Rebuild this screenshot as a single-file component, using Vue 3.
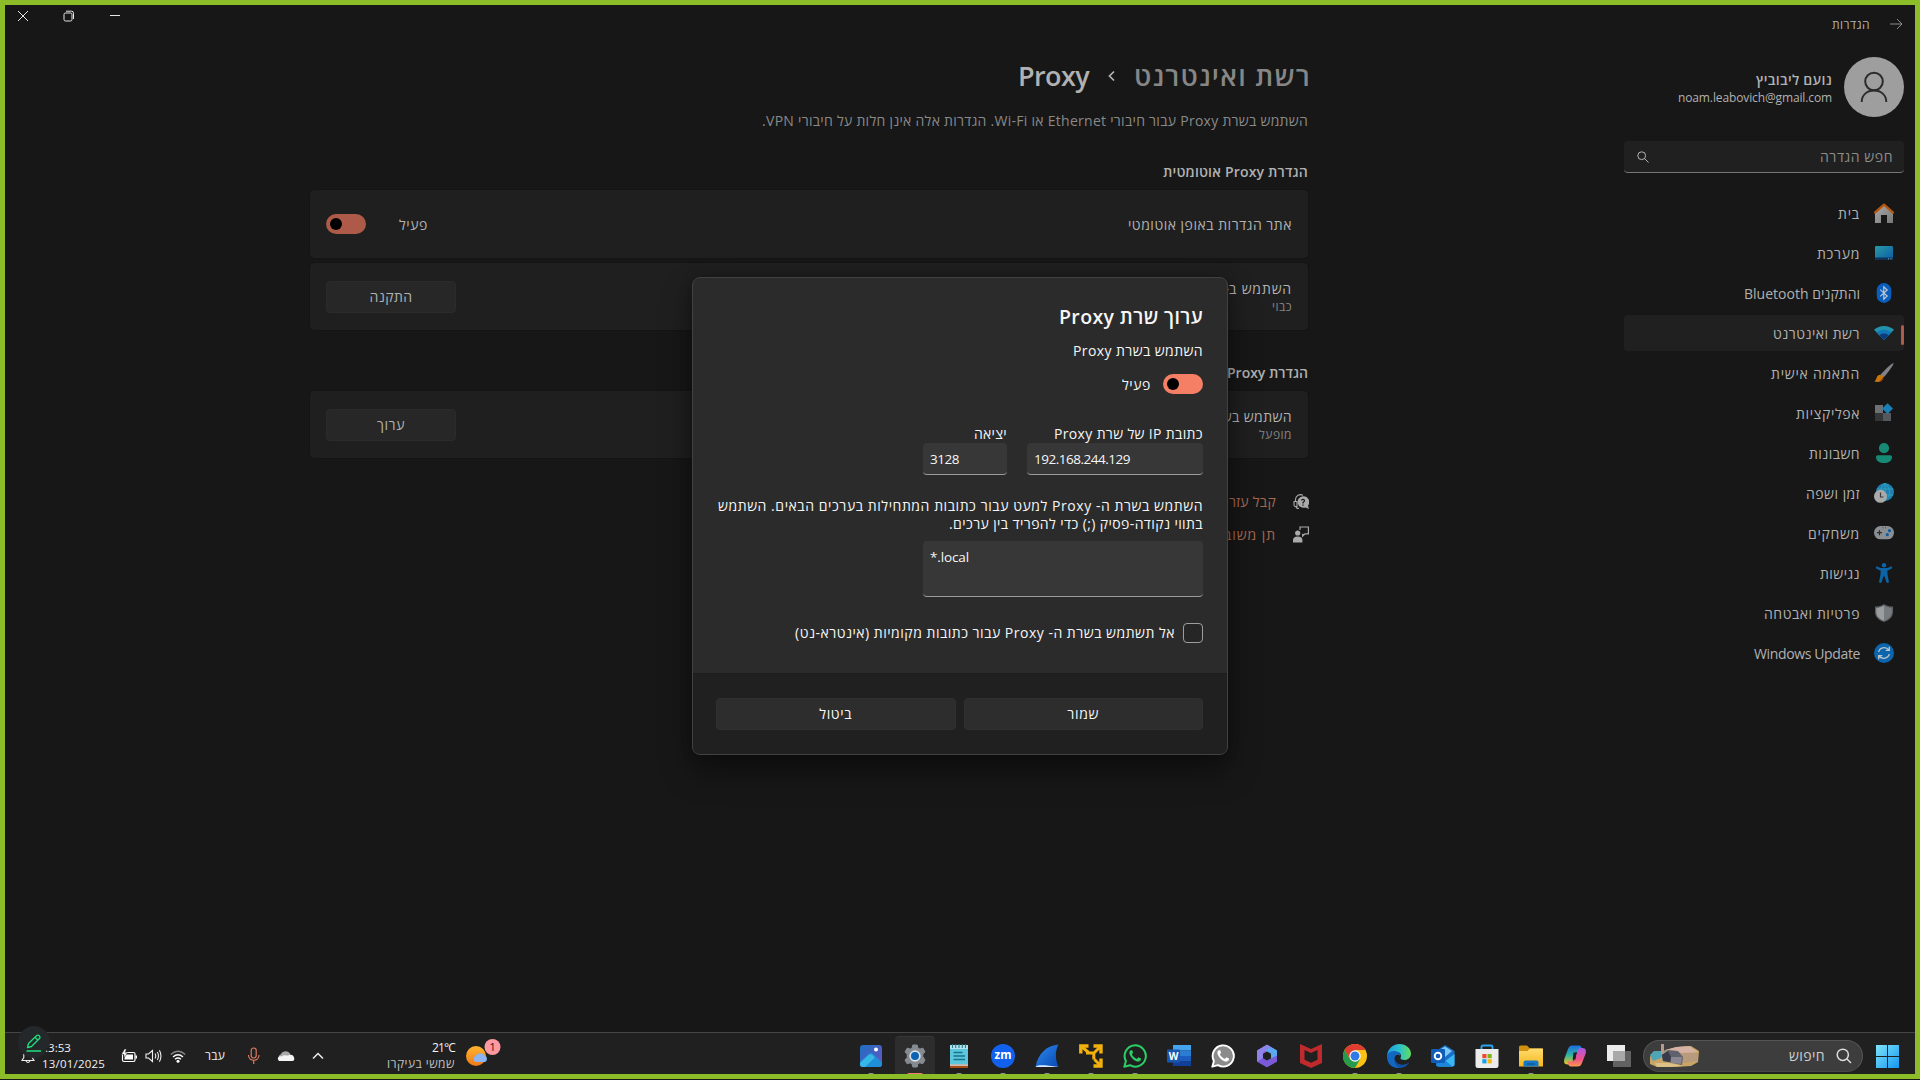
<script setup>
const nav = [
  { icon: 'home', text: 'בית', w: 22 },
  { icon: 'system', text: 'מערכת', w: 43 },
  { icon: 'bluetooth', text: 'והתקנים Bluetooth', w: 116 },
  { icon: 'network', text: 'רשת ואינטרנט', w: 87, active: true },
  { icon: 'brush', text: 'התאמה אישית', w: 89 },
  { icon: 'apps', text: 'אפליקציות', w: 64 },
  { icon: 'accounts', text: 'חשבונות', w: 51 },
  { icon: 'time', text: 'זמן ושפה', w: 54 },
  { icon: 'games', text: 'משחקים', w: 52 },
  { icon: 'access', text: 'נגישות', w: 40 },
  { icon: 'shield', text: 'פרטיות ואבטחה', w: 96 },
  { icon: 'update', text: 'Windows Update', w: 106 },
]

const taskApps = [
  { icon: 'taskview' },
  { icon: 'copilot' },
  { icon: 'explorer', open: true },
  { icon: 'store' },
  { icon: 'outlook' },
  { icon: 'edge', open: true },
  { icon: 'chrome', open: true },
  { icon: 'mcafee' },
  { icon: 'm365' },
  { icon: 'wagray' },
  { icon: 'word', label: 'W' },
  { icon: 'whatsapp', open: true },
  { icon: 'vmware', open: true },
  { icon: 'shark', open: true },
  { icon: 'zoom', open: true, label: 'zm' },
  { icon: 'notepad', open: true },
  { icon: 'settings', active: true },
  { icon: 'photos', open: true },
]

// Tracks a label so that it spans the given width in pixels.
const vFit = {
  mounted(el, { value }) {
    const natural = el.getBoundingClientRect().width
    el.style.letterSpacing = `${((value - natural) / el.textContent.length).toFixed(3)}px`
  },
}
</script>

<template>
  <div class="desktop" dir="rtl">
    <svg class="defs" width="0" height="0">
      <defs>
        <linearGradient id="gTeal" x1="0" y1="0" x2="1" y2="1"><stop offset="0" stop-color="#2a9aa5" /><stop offset="1" stop-color="#0a5ca5" /></linearGradient>
        <linearGradient id="gHome" x1="0" y1="0" x2="1" y2="1"><stop offset="0" stop-color="#aaa" /><stop offset="1" stop-color="#777" /></linearGradient>
        <linearGradient id="gPhoto" x1="0" y1="0" x2="1" y2="1"><stop offset="0" stop-color="#1d6fc0" /><stop offset="1" stop-color="#6b54c4" /></linearGradient>
        <linearGradient id="gWin" x1="0" y1="0" x2="1" y2="1"><stop offset="0" stop-color="#7fe4fb" /><stop offset="1" stop-color="#1597f0" /></linearGradient>
        <linearGradient id="gEdge" x1="0" y1="0" x2="1" y2="0"><stop offset="0" stop-color="#1b9de2" /><stop offset=".55" stop-color="#2fc3c8" /><stop offset="1" stop-color="#62dc5a" /></linearGradient>
        <linearGradient id="gCopA" x1="0" y1="0" x2="0" y2="1"><stop offset="0" stop-color="#1b6ce0" /><stop offset=".5" stop-color="#2db5a0" /><stop offset="1" stop-color="#f5c31c" /></linearGradient>
        <linearGradient id="gCopB" x1="0" y1="0" x2="0" y2="1"><stop offset="0" stop-color="#a65ae6" /><stop offset=".6" stop-color="#f0508c" /><stop offset="1" stop-color="#ff9a4a" /></linearGradient>
        <linearGradient id="gM" x1="0" y1="0" x2="1" y2="1"><stop offset="0" stop-color="#c070e0" /><stop offset="1" stop-color="#4a5fd8" /></linearGradient>
        <linearGradient id="gSun" x1="0" y1="0" x2="0" y2="1"><stop offset="0" stop-color="#ffb52e" /><stop offset="1" stop-color="#f07818" /></linearGradient>
        <linearGradient id="gShark" x1="0" y1="0" x2="1" y2="1"><stop offset="0" stop-color="#2a8cf0" /><stop offset="1" stop-color="#0b48b4" /></linearGradient>
        <linearGradient id="gFolder" x1="0" y1="0" x2="0" y2="1"><stop offset="0" stop-color="#ffdc6e" /><stop offset="1" stop-color="#f6b820" /></linearGradient>
      </defs>

      <symbol id="home" viewBox="0 0 20 20"><path d="M1 8.5 10 1.5 19 8.5V20H13V12H7V20H1Z" fill="url(#gHome)" /><path d="M.9 9.6 10 1.6 19.1 9.6" fill="none" stroke="#b5560f" stroke-width="2.3" stroke-linecap="round" stroke-linejoin="round" /></symbol>
      <symbol id="system" viewBox="0 0 20 20"><rect x="1" y="3" width="18" height="14" rx="1.2" fill="url(#gTeal)" /><path d="M1 14.6H19V16a1 1 0 0 1-1 1H2a1 1 0 0 1-1-1Z" fill="#0d3358" /><path d="M14 15.8h1M16.5 15.8h1" stroke="#9ab" stroke-width="1" /></symbol>
      <symbol id="bluetooth" viewBox="0 0 20 20"><rect x="2.7" y="0" width="14.6" height="20" rx="7.3" fill="#0a5dbb" /><path d="M6.2 6.6 13.2 13 9.8 16.2V3.8L13.2 7 6.2 13.4" fill="none" stroke="#c0c8d0" stroke-width="1.2" /></symbol>
      <symbol id="network" viewBox="0 0 20 20"><path d="M0 6.8C5.5 1.7 14.5 1.7 20 6.8L10 17Z" fill="#2494ad" /><path d="M2.6 9.4C6.5 5.8 13.5 5.8 17.4 9.4L10 17Z" fill="#1277b8" /><path d="M5.3 12.2C8 9.8 12 9.8 14.7 12.2L10 17Z" fill="#0c3c7c" /></symbol>
      <symbol id="brush" viewBox="0 0 20 20"><path d="M19.5.3C20.3 1.2 12 12.2 9.7 14.3L6.6 11.6C9 8.600 18.5-.6 19.5.3Z" fill="#7f8388" /><path d="M5.800 11.8C8.500 11.500 10.300 14 8.800 16.300 7 19.300 3.500 19.500.3 18.600 3 16.800 2 12.500 5.800 11.800Z" fill="#c6780e" /><path d="M6 18.300 8.800 15" stroke="#b9300f" stroke-width="1" /></symbol>
      <symbol id="apps" viewBox="0 0 20 20"><path d="M1 2h8v8H1Z" fill="#6d7176" /><path d="M1 10h8v8H1Z" fill="#343638" /><path d="M9 10h8v8H9Z" fill="#55585c" /><path d="M13.500.2 19 5.600 13.500 11 8.100 5.600Z" fill="#1a7fb6" /></symbol>
      <symbol id="accounts" viewBox="0 0 20 20"><circle cx="10" cy="5.100" r="5.100" fill="#168a74" /><path d="M2 14a1.800 1.800 0 0 1 1.800-1.800H16.200A1.800 1.800 0 0 1 18 14C18 18 14.500 20 10 20S2 18 2 14Z" fill="#168a74" /></symbol>
      <symbol id="time" viewBox="0 0 20 20"><circle cx="11" cy="9" r="9" fill="#1d7fb2" /><path d="M11 0v18M3 6h16M3 12h16M11 0c-6 5-6 13 0 18M11 0c6 5 6 13 0 18" stroke="#2fa2bd" fill="none" stroke-width=".9" /><circle cx="6.500" cy="13.300" r="6.500" fill="#a9a9a9" /><path d="M6.500 9.500V14H9.500" fill="none" stroke="#3b3b3b" stroke-width="1.200" /></symbol>
      <symbol id="games" viewBox="0 0 20 20"><rect y="3" width="20" height="13.300" rx="6.500" fill="#8b8f93" /><path d="M5.500 7.200v5M3 9.700h5" stroke="#2c2c2c" stroke-width="1.200" /><circle cx="15.500" cy="7.700" r="1.600" fill="#0e5ca0" /><circle cx="13.300" cy="11.700" r="1.600" fill="#0e5ca0" /><path d="M8.500 4.800h1M11 4.800h1" stroke="#444" stroke-width="1" /></symbol>
      <symbol id="access" viewBox="0 0 20 20"><circle cx="10" cy="2.300" r="2.200" fill="#0c64a6" /><path d="M2 3.900C3 3 4 4 6.500 5H13.500C16 4 17 3 18 3.900 18.600 5 17.500 6 13.300 7.800L13.600 12 15 19.300C14 20.500 12.600 20 12.300 19L10.600 13.500H9.400L7.700 19C7.400 20 6 20.500 5 19.300L6.400 12 6.700 7.800C2.500 6 1.400 5 2 3.900Z" fill="#0c64a6" /></symbol>
      <symbol id="shield" viewBox="0 0 20 20"><path d="M10 1C12.500 3 15.500 3.500 19 3.500V9C19 14 15 17.500 10 19 5 17.500 1 14 1 9V3.500C4.500 3.500 7.500 3 10 1Z" fill="#5d6165" /><path d="M10 2.500C12.500 4.300 15 4.800 17.700 4.900V9C17.700 13.500 14 16.500 10 17.700Z" fill="#777b7f" /><path d="M10 2.500C7.500 4.300 5 4.800 2.300 4.900V9C2.300 13.500 6 16.500 10 17.700Z" fill="#9b9ea1" /></symbol>
      <symbol id="update" viewBox="0 0 20 20"><circle cx="10" cy="10" r="10" fill="#0d65ad" /><path d="M4.700 9C5.500 4.500 11.500 3 15 7M15.300 11C14.500 15.500 8.500 17 5 13M15.300 3.800V7.400H11.700M4.700 16.200V12.600H8.300" fill="none" stroke="#bcc4ca" stroke-width="1.300" /></symbol>

      <symbol id="photos" viewBox="0 0 24 24"><rect x="1" y="1" width="22" height="22" rx="3" fill="url(#gPhoto)" /><path d="M1 18 10.500 9.500Q12 8.400 13.500 9.500L23 18.500V20a3 3 0 0 1-3 3H4a3 3 0 0 1-3-3Z" fill="#1f8fd8" /><path d="M1 19 9.500 11Q11.500 9.300 13.500 11L16 13.500 6 23H4a3 3 0 0 1-3-3Z" fill="#36b7e6" /><circle cx="17" cy="5.500" r="2" fill="#fff" /></symbol>
      <symbol id="settings" viewBox="0 0 24 24"><path d="M9.800 1h4.400l.7 3 2 1.100 3-1L22 8l-2.200 2v2.500L22 16l-2.200 3.800-3-1-2 1.100-.6 3.100H9.800l-.7-3.100-2-1.100-3 1L2 16l2.200-2.500V10L2 8l2.200-3.900 3 1L9.200 4Z" fill="#868b91" stroke="#868b91" stroke-linejoin="round" /><circle cx="12" cy="12" r="5.700" fill="#d9e2ea" /><circle cx="12" cy="12" r="4" fill="#0d62b4" /></symbol>
      <symbol id="notepad" viewBox="0 0 24 24"><rect x="3" y="2" width="18" height="20" fill="#5cc6da" /><path d="M3 20.500h18V24H3Z" fill="#a84c1a" /><path d="M3 20.500h18v1.200H3Z" fill="#e8eef0" /><rect x="3" y="1" width="18" height="4" fill="#b4e2ec" /><path d="M5.500 0v4M8.700 0v4M12 0v4M15.300 0v4M18.500 0v4" stroke="#2b7d91" stroke-width="1.100" /><path d="M6.500 8.500h9M6.500 12h11.500M6.500 15.500h11.500" stroke="#167391" stroke-width="1.600" /></symbol>
      <symbol id="zoom" viewBox="0 0 24 24"><circle cx="12" cy="12" r="12" fill="#1261ee" /></symbol>
      <symbol id="shark" viewBox="0 0 24 24"><path d="M.5 23C3 9 12 1.500 23.500.500 19.500 8 20.500 16 23.500 23Z" fill="url(#gShark)" /><path d="M.5 23C2 20.500 9 20.500 23.500 23Z" fill="#dcebff" /></symbol>
      <symbol id="vmware" viewBox="0 0 24 24"><path d="M1.800 9.500V2H9.500M14.500 2H22V9.500M22 14.500V22H14.500" fill="none" stroke="#f2b10c" stroke-width="3.400" /><path d="M2 2 9.500 8.500M22 2 15 9M22 22 15.500 15.500M15 9H7M14.800 8.500V15.500" fill="none" stroke="#f2b10c" stroke-width="3" /></symbol>
      <symbol id="whatsapp" viewBox="0 0 24 24"><path d="M1.300 22.700 2.900 17A10.600 10.600 0 1 1 7 21.200Z" fill="#202020" stroke="#29cf66" stroke-width="2" stroke-linejoin="round" /><path d="M7.600 6.300C6 7.500 5.900 9.500 7.500 12 10 16 13.500 18 15.700 17.600 17.300 17.200 18.300 16 18 14.600L15.300 13.300 13.900 14.900C11.500 14 9.700 12.200 8.900 10.300L10.100 8.800 9.200 6.300Z" fill="#29cf66" /></symbol>
      <symbol id="wagray" viewBox="0 0 24 24"><path d="M1.300 22.700 2.900 17A10.600 10.600 0 1 1 7 21.200Z" fill="#8b8b8b" stroke="#fff" stroke-width="1.900" stroke-linejoin="round" /><path d="M7.600 6.300C6 7.500 5.900 9.500 7.500 12 10 16 13.500 18 15.700 17.600 17.300 17.200 18.300 16 18 14.600L15.300 13.300 13.900 14.900C11.500 14 9.700 12.200 8.900 10.300L10.100 8.800 9.200 6.300Z" fill="#fff" /></symbol>
      <symbol id="word" viewBox="0 0 24 24"><path d="M6 1H24V6.500H6Z" fill="#44a5ee" /><path d="M6 6.500H24V12H6Z" fill="#2b7cd3" /><path d="M6 12H24V17.500H6Z" fill="#1b5cbe" /><path d="M6 17.500H24V22H6Z" fill="#10409a" /><rect y="5.500" width="13" height="13" rx="1" fill="#1856b4" /></symbol>
      <symbol id="m365" viewBox="0 0 24 24"><path d="M12 .800 22 6.500V17.500L12 23.200 2 17.500V6.500Z" fill="url(#gM)" /><path d="M12 .800 22 6.500V14L16 14.200V9.800L8 5.500V3Z" fill="#5ba8f0" /><path d="M12 .800 16 3 8 8V14.200L2 17.500V6.500Z" fill="#8e84ea" /><path d="M2 17.500 8 14.200 12 16.500 22 11.500V17.500L12 23.200Z" fill="#7a5ad8" /><path d="M12 7.500 16 9.800V14.200L12 16.500 8 14.200V9.800Z" fill="#202020" /></symbol>
      <symbol id="mcafee" viewBox="0 0 24 24"><path d="M1 0 12 5 23 0V19L12 24 1 19Z" fill="#bf2a2c" /><path d="M5.500 6 12 9 18.500 6V15.800L12 18.800 5.500 15.800Z" fill="#202020" /></symbol>
      <symbol id="chrome" viewBox="0 0 24 24"><circle cx="12" cy="12" r="12" fill="#fbc116" /><path d="M12 6H22.400A12 12 0 0 0 1.600 6L6.800 15Z" fill="#e03d30" /><path d="M1.600 6A12 12 0 0 0 12 24L17.200 15 12 17.500 6.800 15Z" fill="#249c4b" /><circle cx="12" cy="12" r="5.700" fill="#fff" /><circle cx="12" cy="12" r="4.500" fill="#2f7ae5" /></symbol>
      <symbol id="edge" viewBox="0 0 24 24"><path d="M0 12C.500 5 5.500 0 12.500 0 19 0 24 4.500 24 9.500 24 13.500 21 16 17.500 16 14.500 16 13 14.800 13.500 13.800 15 11.500 13.500 8 9.500 8 5 8 2 10 0 12Z" fill="url(#gEdge)" /><path d="M0 12C1 8 5 6.500 9 7.200 12.500 8 13.700 10 13.200 12 11 9.500 7.500 11 7.500 15 7.500 19.500 12 23.500 15.500 23 7 26.500-.500 20.500 0 12Z" fill="#1268c0" /><path d="M8 13C7 18 12 21.500 17 20.500 19.500 20 21.500 19 22.500 18 20 22.500 16 24 12.500 24 8 21.500 6.500 16 8 13Z" fill="#0f4ea0" /></symbol>
      <symbol id="outlook" viewBox="0 0 24 24"><path d="M5 7 14 1 23.500 7V20.500a2 2 0 0 1-2 2H7a2 2 0 0 1-2-2Z" fill="#1a6fc6" /><path d="M7 7 14 2.500 21 7 14 13Z" fill="#7cc7f5" /><path d="M23.500 8.500V20.500a2 2 0 0 1-2 2H7L23.500 10Z" fill="#3ab6f2" /><path d="M10 13 21.500 22.500H7a2 2 0 0 1-2-2Z" fill="#1b86dc" /><rect y="5" width="14" height="14" rx="1" fill="#0f5db8" /><circle cx="7" cy="12" r="3.300" fill="none" stroke="#fff" stroke-width="1.900" /></symbol>
      <symbol id="store" viewBox="0 0 24 24"><path d="M6.500 6V3a1.500 1.500 0 0 1 1.500-1.500h8A1.500 1.500 0 0 1 17.500 3V6" fill="none" stroke="#2ba5ea" stroke-width="1.900" /><path d="M.5 5h23V21.500a2.500 2.500 0 0 1-2.500 2.500H3a2.500 2.500 0 0 1-2.500-2.500Z" fill="#ececec" /><path d="M7.300 10h4.200v4.200H7.300Z" fill="#ee4d2a" /><path d="M12.500 10h4.200v4.200h-4.200Z" fill="#7cb518" /><path d="M7.300 15.200h4.200v4.200H7.300Z" fill="#16a0e8" /><path d="M12.500 15.200h4.200v4.200h-4.200Z" fill="#fab60b" /></symbol>
      <symbol id="explorer" viewBox="0 0 24 24"><path d="M0 3a1.500 1.500 0 0 1 1.500-1.500H8L11 4.500H22.500A1.500 1.500 0 0 1 24 6V12H0Z" fill="#cf9210" /><path d="M0 7H8.500L11 4.500H24V22.500H0Z" fill="url(#gFolder)" /><path d="M4.500 22.500V18.500A2 2 0 0 1 6.500 16.500H17.500A2 2 0 0 1 19.500 18.500V22.500Z" fill="#1878c4" /><path d="M8 20h8" stroke="#0b559b" stroke-width="1.300" /></symbol>
      <symbol id="copilot" viewBox="0 0 24 24"><path d="M9.500 1.500H16C18 1.500 18.500 3 19 5L20 8H14.500C12.500 8 12 9.500 11.500 11.500L9.500 18C9 19.500 8 20.500 6 20.500H4.500C1 20.500.500 17.500 1.500 14.500L5 5C6 2.500 7 1.500 9.500 1.500Z" fill="url(#gCopA)" /><path d="M14.500 22.500H8C6 22.500 5.500 21 5 19L4.500 17.500H8C10.500 17.500 11.500 16 12.500 13L14.500 6.500C15 5 16 4 18 4H19.500C23 4 23.500 7 22.500 10L19 19C18 21.500 17 22.500 14.500 22.500Z" fill="url(#gCopB)" /><path d="M10.500 8.500H13.500L12.500 15.500H9.700Z" fill="#202020" /></symbol>
      <symbol id="taskview" viewBox="0 0 24 24"><path d="M6 7H24V23H6Z" fill="#626262" /><path d="M0 1H18V17H0Z" fill="#ececec" /><path d="M6 7H18V17H6Z" fill="#a9a9a9" /></symbol>
    </svg>

    <main class="window">
      <header class="titlebar">
        <div class="heading">
          <svg width="14" height="14" viewBox="0 0 14 14" class="line"><path d="M1 7h12M8 2l5 5-5 5" /></svg>
          <span v-fit="38">הגדרות</span>
        </div>
        <div class="controls">
          <svg width="36" height="12" viewBox="-12 0 36 12" class="line"><path d="M1 5.500h10" /></svg>
          <svg width="36" height="12" viewBox="-12 0 36 12" class="line"><rect x="1" y="3" width="8" height="8" rx="1.500" /><path d="M3 1.200H8.500Q10.500 1.200 10.500 3.200V9" /></svg>
          <svg width="36" height="12" viewBox="-12 0 36 12" class="line"><path d="M1 1l10 10M11 1 1 11" /></svg>
        </div>
      </header>

      <div class="columns">
        <aside class="sidebar">
          <div class="user">
            <svg width="60" height="60" viewBox="0 0 60 60"><circle cx="30" cy="30" r="30" fill="#9e9e9e" /><circle cx="30" cy="24.500" r="8.800" fill="none" stroke="#2b2b2b" stroke-width="2" /><path d="M17.700 45C17.700 38 23 33.500 30 33.500S42.300 38 42.300 45" fill="none" stroke="#2b2b2b" stroke-width="2" /></svg>
            <div class="who">
              <b v-fit="76">נועם ליבוביץ</b>
              <small v-fit="154" dir="ltr">noam.leabovich@gmail.com</small>
            </div>
          </div>
          <div class="search">
            <span v-fit="73">חפש הגדרה</span>
            <svg width="12" height="12" viewBox="0 0 12 12" class="line"><circle cx="4.700" cy="4.700" r="3.900" /><path d="M7.500 7.500 11.500 11.500" /></svg>
          </div>
          <nav>
            <div v-for="n in nav" :key="n.icon" class="item" :class="{ active: n.active }">
              <svg width="20" height="20"><use :href="'#' + n.icon" /></svg>
              <span v-fit="n.w">{{ n.text }}</span>
            </div>
          </nav>
        </aside>

        <section class="content">
          <h1>
            <span v-fit="177" class="crumb">רשת ואינטרנט</span>
            <svg width="9" height="14" viewBox="0 0 9 14" class="line"><path d="M7 2.500 2.500 7l4.500 4.500" stroke-width="1.700" /></svg>
            <span v-fit="71">Proxy</span>
          </h1>
          <p class="desc"><span v-fit="546">השתמש בשרת Proxy עבור חיבורי Ethernet או Wi-Fi. הגדרות אלה אינן חלות על חיבורי VPN.</span></p>

          <h2><span v-fit="145">הגדרת Proxy אוטומטית</span></h2>
          <div class="card tall">
            <span v-fit="164">אתר הגדרות באופן אוטומטי</span>
            <div class="state">
              <span v-fit="29">פעיל</span>
              <i class="toggle dim"></i>
            </div>
          </div>
          <div class="card">
            <div class="two">
              <div><span v-fit="63">השתמש ב</span><span>-Script התקנה</span></div>
              <small v-fit="20">כבוי</small>
            </div>
            <div class="btn"><span v-fit="43">התקנה</span></div>
          </div>

          <h2 class="second"><span v-fit="81">הגדרת Proxy</span> ידנית</h2>
          <div class="card">
            <div class="two">
              <div><span v-fit="130">השתמש בשרת Proxy</span></div>
              <small v-fit="33">מופעל</small>
            </div>
            <div class="btn"><span v-fit="28">ערוך</span></div>
          </div>

          <div class="link">
            <svg width="16" height="17" viewBox="0 0 16 17"><path d="M2.500 8.500V6.500A5 5 0 0 1 10 2.300M1 8.500h3v5H2.500A1.500 1.500 0 0 1 1 12ZM3 13.500Q3 15.500 6 15.500" fill="none" stroke="#aaa" stroke-width="1.100" /><path d="M10 3.200a5.800 5.800 0 1 0 2.500 11.200L15.800 16 15 12.500A5.800 5.800 0 0 0 10 3.200Z" fill="#aaa" /><path d="M8.400 7.500Q8.600 6.300 10 6.300T11.500 7.700Q11.500 8.500 10 9.400V10.600M10 11.500v1.200" fill="none" stroke="#171717" stroke-width="1.200" /></svg>
            <span v-fit="56">קבל עזרה</span>
          </div>
          <div class="link">
            <svg width="16" height="17" viewBox="0 0 16 17"><circle cx="4.700" cy="7" r="2.600" fill="#aaa" /><path d="M0 16.500V14Q0 10.500 4.700 10.500T9.400 14V16.500Z" fill="#aaa" /><path d="M7 4V1H15.400V7.800H12L9.700 10V7.800" fill="none" stroke="#aaa" stroke-width="1.200" /></svg>
            <span v-fit="52">תן משוב</span>
          </div>
        </section>
      </div>

      <div class="dialog">
        <div class="body">
          <h3><span v-fit="144">ערוך שרת Proxy</span></h3>
          <div class="sub"><span v-fit="130">השתמש בשרת Proxy</span></div>
          <div class="switch"><i class="toggle"></i><span v-fit="29">פעיל</span></div>
          <div class="fields">
            <label class="ip"><span v-fit="149">כתובת IP של שרת Proxy</span><div class="input" dir="ltr"><span v-fit="96">192.168.244.129</span></div></label>
            <label class="port"><span v-fit="33">יציאה</span><div class="input" dir="ltr"><span v-fit="29">3128</span></div></label>
          </div>
          <div class="para">
            <div><span v-fit="485">השתמש בשרת ה- Proxy למעט עבור כתובות המתחילות בערכים הבאים. השתמש</span></div>
            <div><span v-fit="254">בתווי נקודה-פסיק (;) כדי להפריד בין ערכים.</span></div>
          </div>
          <div class="input area" dir="ltr"><span v-fit="39">*.local</span></div>
          <div class="check"><i></i><span v-fit="380">אל תשתמש בשרת ה- Proxy עבור כתובות מקומיות (אינטרא-נט)</span></div>
        </div>
        <footer>
          <div><span v-fit="32">שמור</span></div>
          <div><span v-fit="33">ביטול</span></div>
        </footer>
      </div>
    </main>

    <div class="taskbar">
      <div class="start">
        <svg width="23" height="23" viewBox="0 0 23 23"><path d="M0 0h11v11H0ZM12 0h11v11H12ZM0 12h11v11H0ZM12 12h11v11H12Z" fill="url(#gWin)" /></svg>
      </div>
      <div class="pill">
        <svg width="16" height="16" viewBox="0 0 16 16"><circle cx="6.800" cy="6.800" r="5.600" fill="none" stroke="#ddd" stroke-width="1.500" /><path d="M11 11 15 15" stroke="#ddd" stroke-width="1.500" /></svg>
        <span v-fit="36">חיפוש</span>
        <svg class="art" width="50" height="24" viewBox="0 0 50 24"><path d="M1 13 4 8 14 7 28 3 42 2 50 7 49 18 42 22 25 23 8 23 1 20Z" fill="#c9a667" /><path d="M1 11 5 7 16 7 12 14 4 17Z" fill="#4fa5b4" /><path d="M16 6 27 3 40 2 44 5 49 8 34 9Z" fill="#d5b2a4" /><path d="M30 9 49 9 49 17 34 19Z" fill="#b89a7c" /><path d="M12 0h3v10h-3Z" fill="#b79a8c" /><path d="M13 11 19 6 29 7 34 13 33 21 14 17Z" fill="#60616e" /><path d="M13 11 19 7 22 13 21 18 14 17Z" fill="#393b4a" /><path d="M22 13 33 13 32 20 22 19Z" fill="#8a8790" /><path d="M6 19 20 19 34 22 20 23 8 23Z" fill="#dcc186" /></svg>
      </div>
      <div v-for="a in taskApps" :key="a.icon" class="app" :class="[a.icon, { open: a.open, active: a.active }]">
        <svg width="24" height="24"><use :href="'#' + a.icon" /></svg>
        <b v-if="a.label">{{ a.label }}</b>
      </div>

      <div class="tray">
        <div class="weather">
          <svg width="36" height="32" viewBox="0 0 36 32"><circle cx="11" cy="19" r="10" fill="url(#gSun)" /><path d="M10.500 25A3.500 3.500 0 0 1 11 18.600 5 5 0 0 1 19.500 18.500 3.500 3.500 0 0 1 20 25Z" fill="#8bb4f0" /><circle cx="27.500" cy="10" r="8" fill="#ff98a0" /><text x="27.500" y="14.200" text-anchor="middle" font-family="Open Sans, sans-serif" font-size="11.500" fill="#222">1</text></svg>
          <div class="wtext"><span v-fit="23" dir="ltr">21°C</span><span v-fit="68" class="soft">שמשי בעיקרו</span></div>
        </div>
        <svg class="chev" width="12" height="8" viewBox="0 0 12 8"><path d="M1 6.500 6 1.500 11 6.500" fill="none" stroke="#eee" stroke-width="1.500" /></svg>
        <svg class="cloud" width="18" height="12" viewBox="0 0 18 12"><path d="M4 11A3.500 3.500 0 0 1 3.500 4.500 5.500 5.500 0 0 1 13 3.500L15 11Z" fill="#a8a8a8" /><path d="M2 11C-.500 9 1.500 5.500 4.500 6.500 7 4 10 6 11 5.500 14 3.500 17.500 5.500 17.300 9 17 11 16 11 14.500 11Z" fill="#f5f5f5" /></svg>
        <svg class="mic" width="14" height="18" viewBox="0 0 14 18"><rect x="4.200" y="1" width="5" height="10" rx="2.500" fill="none" stroke="#d97a5e" stroke-width="1.200" /><path d="M1.500 8C1.500 15 12 15 12 8M6.700 13.200V17" fill="none" stroke="#d97a5e" stroke-width="1.200" /></svg>
        <span v-fit="20" class="lang">עבר</span>
        <svg class="wifi" width="16" height="13" viewBox="0 0 16 13"><path d="M.8 4.500Q8-2 15.200 4.500" fill="none" stroke="#888" stroke-width="1.400" /><path d="M3 7Q8 2.600 13 7M5 9.300Q8 6.800 11 9.300" fill="none" stroke="#fff" stroke-width="1.400" /><circle cx="8" cy="11.200" r="1.500" fill="#fff" /></svg>
        <svg class="vol" width="17" height="14" viewBox="0 0 17 14"><path d="M1 5H3.500L7.500 1.500V12.500L3.500 9H1ZM10 4.500Q11.500 7 10 9.500M12.300 3Q14.700 7 12.300 11M14.400 1.300Q17.500 7 14.400 12.700" fill="none" stroke="#eee" stroke-width="1.100" /></svg>
        <svg class="bat" width="17" height="14" viewBox="0 0 17 14"><rect x="1.500" y="3.500" width="12.500" height="9" rx="1.500" fill="none" stroke="#fff" stroke-width="1.200" /><rect x="3.500" y="5.500" width="8.500" height="5" fill="#fff" /><path d="M14.500 6.500h1.500v3h-1.500" fill="#fff" /><path d="M3.500 0 .500 5.500H3V9L6.500 3.800H4L5.500 0Z" fill="#fff" stroke="#202020" stroke-width=".5" /></svg>
        <div class="clock" dir="ltr"><span v-fit="26" class="hour">.3:53</span><span v-fit="63">13/01/2025</span></div>
        <svg class="bell" width="14" height="15" viewBox="0 0 14 15"><path d="M7 1.200C3.500 1.200 2.800 4 2.800 6V8.500L1 11.500H13L11.200 8.500V6C11.200 4 10.500 1.200 7 1.200ZM5 12Q7 14.800 9 12" fill="none" stroke="#eee" stroke-width="1.100" /></svg>
      </div>
    </div>

    <div class="pencil">
      <svg width="16" height="18" viewBox="0 0 16 18"><path d="M1.500 13.500 2.500 9.500 10.800 1.500Q12 .700 13.200 1.800T13.700 4.300L5.500 12.500ZM9 3.300 12 6.200M.5 17H15" fill="none" stroke="#1fe07c" stroke-width="1.300" stroke-linejoin="round" /></svg>
    </div>
  </div>
</template>

<style>
body { background: #171717; overflow: hidden; }
</style>

<style scoped>
* { box-sizing: border-box; }
.desktop {
  position: relative; width: 1920px; height: 1079px; display: flex; flex-direction: column;
  border: 5px solid #8cbc27;
  background: #171717; color: #b1b1b1;
  font-family: "Open Sans", "Noto Sans", sans-serif; font-size: 14px; line-height: 20px;
}
.defs { position: absolute; }
span, b, small { white-space: nowrap; }
svg { flex: none; display: block; }
i { flex: none; display: block; }
.line { fill: none; stroke: #b4b4b4; stroke-width: 1; }
.window { position: relative; height: 1027px; flex: none; }

.titlebar { display: flex; justify-content: space-between; height: 52px; }
.heading { display: flex; gap: 19px; align-items: center; height: 38px; padding-right: 12px; font-size: 12px; }
.heading svg { stroke: #8c8c8c; }
.heading span { padding-top: 2px; }
.controls { display: flex; gap: 10px; padding-top: 5px; }
.controls .line { stroke: #e6e6e6; }

.columns { display: flex; padding-right: 11px; gap: 316px; }
.sidebar { width: 280px; }
.user { display: flex; gap: 12px; align-items: center; height: 60px; }
.who { display: flex; flex-direction: column; align-items: flex-start; padding-top: 3px; }
.who b { font-weight: 600; line-height: 18px; }
.who small { font-size: 12px; line-height: 18px; }
.search {
  display: flex; align-items: center; justify-content: space-between; height: 32px; margin-top: 24px;
  padding: 0 11px 0 13px; background: #202020; border-radius: 4px; border-bottom: 1px solid #757575; color: #8d8d8d;
}
nav { display: flex; flex-direction: column; gap: 4px; margin-top: 22px; }
.item { position: relative; display: flex; align-items: center; gap: 14px; height: 36px; padding-right: 10px; border-radius: 4px; }
.item span { padding-top: 2px; }
.item.active { background: #202020; }
.item.active::before { content: ""; position: absolute; right: 0; top: 10px; width: 3px; height: 20px; border-radius: 2px; background: #ae5b49; }

.content { width: 998px; }
h1 { display: flex; align-items: center; gap: 18px; margin: 0; height: 37px; font-size: 27px; font-weight: 600; line-height: 36px; }
h1 .crumb { color: #868686; margin-right: -3px; }
.desc { margin: 17px 0 0; height: 20px; color: #898989; }
h2 { margin: 31px 0 0; font-size: 14px; font-weight: 600; line-height: 20px; height: 20px; white-space: nowrap; }
h2.second { margin-top: 33px; }
.card {
  display: flex; align-items: center; justify-content: space-between; height: 68px; padding: 0 16px; margin-top: 5px;
  background: #1f1f1f; border-radius: 4px; outline: 1px solid #141414; outline-offset: 0;
}
.card.tall { margin-top: 8px; }
.card.tall span { padding-top: 2px; }
h2 + .card { margin-top: 8px; }
.card:not(.tall) { height: 67px; }
.state { display: flex; align-items: center; gap: 33px; }
.two { display: flex; flex-direction: column; padding-top: 2px; }
.two > div { line-height: 18px; }
.two small { font-size: 12px; line-height: 17px; color: #868686; align-self: flex-start; }
.btn { width: 130px; height: 32px; display: flex; align-items: center; justify-content: center; background: #272727; border-radius: 4px; border: 1px solid #2b2b2b; }
.toggle { width: 40px; height: 20px; border-radius: 10px; background: #f47f65; padding: 4px 24px 4px 4px; }
.toggle::before { content: ""; display: block; width: 12px; height: 12px; border-radius: 50%; background: #000; }
.toggle.dim { background: #ad5b48; }
.link { display: flex; align-items: center; gap: 17px; height: 33px; margin-right: -1px; color: #a9674f; }
h2.second + .card + .link { margin-top: 27px; }

.dialog {
  position: absolute; left: 687px; top: 272px; width: 536px; height: 478px; display: flex; flex-direction: column;
  background: #2b2b2b; border: 1px solid #414141; border-radius: 8px; color: #f6f6f6;
  box-shadow: 0 16px 32px rgba(0, 0, 0, .4), 0 0 12px rgba(0, 0, 0, .25);
}
.body { height: 395px; padding: 24px 24px 0; }
h3 { margin: 0; font-size: 19.500px; font-weight: 600; line-height: 30px; }
.sub { margin-top: 9px; }
.switch { display: flex; align-items: center; gap: 12px; height: 20px; margin-top: 13px; }
.switch span { padding-top: 1px; }
.fields { display: flex; gap: 20px; margin-top: 31px; }
.fields label { display: flex; flex-direction: column; }
.fields label > span { align-self: flex-start; line-height: 18px; }
.ip { width: 176px; }
.port { width: 84px; }
.input { height: 32px; padding: 6px 7px; background: #373737; border-radius: 4px; border-bottom: 1px solid #9b9b9b; font-size: 13.500px; }
.para { margin-top: 22px; line-height: 18px; }
.area { width: 280px; height: 56px; margin-top: 8px; }
.check { display: flex; align-items: center; gap: 8px; margin-top: 26px; height: 20px; }
.check i { width: 20px; height: 20px; border: 1px solid #9d9d9d; border-radius: 4px; background: #262626; }
footer { flex: 1; display: flex; gap: 8px; padding: 24px 24px 0 23px; background: #202020; border-radius: 0 0 7px 7px; border-top: 1px solid #1d1d1d; }
footer > div { flex: 1; height: 32px; display: flex; align-items: center; justify-content: center; background: #2d2d2d; border: 1px solid #303030; border-radius: 4px; }

.taskbar { display: flex; flex: 1; background: #202020; border-top: 1px solid #454545; color: #f2f2f2; font-size: 12px; overflow: hidden; }
.start { width: 50px; padding-top: 12px; padding-right: 16px; margin-left: 2px; }
.pill { width: 220px; height: 32px; margin-top: 7px; display: flex; align-items: center; padding-right: 10px; gap: 11px; background: #3d3d3d; border: 1px solid #555; border-bottom-color: #484848; border-radius: 16px; font-size: 14px; color: #d0d0d0; }
.pill .art { margin-right: 79px; }
.app { position: relative; width: 44px; height: 42px; padding: 11px 10px 0; }
.pill + .app { margin-right: 2px; }
.app.open::after { content: ""; position: absolute; left: 19px; bottom: 0; width: 6px; height: 2px; border-radius: 2px 2px 0 0; background: #939393; }
.app.active::before { content: ""; position: absolute; left: 2px; right: 2px; top: 3px; bottom: 0; background: #2d2d2d; border-top: 1px solid #363636; border-radius: 4px 4px 0 0; }
.app.active::after { content: ""; position: absolute; left: 14px; bottom: 0; width: 16px; height: 2px; border-radius: 2px 2px 0 0; background: #f47f65; }
.app svg { position: relative; }
.app b { position: absolute; left: 10px; top: 11px; line-height: 24px; text-align: center; color: #fff; }
.word b { width: 13px; font-size: 10px; }
.zoom b { width: 24px; line-height: 22px; font-size: 11.500px; }
.tray { display: flex; align-items: center; height: 46px; margin-right: 348px; }
.weather { display: flex; gap: 10px; align-items: center; }
.weather svg { margin-top: -7px; }
.wtext, .clock { display: flex; flex-direction: column; align-items: flex-start; line-height: 16px; }
.soft { color: #c0c0c0; }
.chev { margin-right: 63px; }
.cloud { margin-right: 17px; }
.mic { margin-right: 16px; }
.lang { margin-right: 22px; }
.wifi { margin-right: 19px; }
.vol { margin-right: 8px; }
.bat { margin-right: 7px; }
.clock { margin-right: 16px; width: 63px; font-size: 11.500px; }
.hour { margin-left: 3px; }
.bell { margin-right: 7px; }
.pencil { position: absolute; left: 13px; top: 1021px; width: 32px; height: 32px; padding: 8px; border-radius: 50%; background: #24282a; clip-path: polygon(0 0, 100% 0, 100% 62%, 88% 72%, 88% 100%, 0 100%); }
</style>
